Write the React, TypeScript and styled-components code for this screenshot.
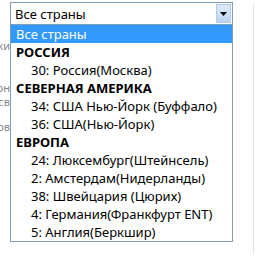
import React from 'react';
import styled, { createGlobalStyle } from 'styled-components';

const GlobalStyle = createGlobalStyle`
  html, body {
    margin: 0;
    padding: 0;
    background: #fff;
  }
`;

type Option = { label: string; kind: 'all' | 'group' | 'item' };

const options: Option[] = [
  { label: 'Все страны', kind: 'all' },
  { label: 'РОССИЯ', kind: 'group' },
  { label: '30: Россия(Москва)', kind: 'item' },
  { label: 'СЕВЕРНАЯ АМЕРИКА', kind: 'group' },
  { label: '34: США Нью-Йорк (Буффало)', kind: 'item' },
  { label: '36: США(Нью-Йорк)', kind: 'item' },
  { label: 'ЕВРОПА', kind: 'group' },
  { label: '24: Люксембург(Штейнсель)', kind: 'item' },
  { label: '2: Амстердам(Нидерланды)', kind: 'item' },
  { label: '38: Швейцария (Цюрих)', kind: 'item' },
  { label: '4: Германия(Франкфурт ENT)', kind: 'item' },
  { label: '5: Англия(Беркшир)', kind: 'item' },
];

// labels of the form behind the open list, only their ends peek out
const hiddenLabels = [
  { text: 'Настройки', gap: 37 },
  { text: 'Регион', gap: 29 },
  { text: 'Провайдер св', gap: 1 },
  { text: 'Тип сервера ов', gap: 12 },
];

const App = () => (
  <Root>
    <GlobalStyle />
    <Labels>
      {hiddenLabels.map((l) => (
        <Faded key={l.text} gap={l.gap}>{l.text}</Faded>
      ))}
    </Labels>
    <Field>
      <Select>
        <Value>Все страны</Value>
        <ArrowButton>
          <svg width="7" height="4" viewBox="0 0 7 4">
            <path d="M0 0h7L3.5 4z" fill="#000" />
          </svg>
        </ArrowButton>
      </Select>
      <List>
        {options.map((o, i) => (
          <Row key={o.label} kind={o.kind} selected={i === 0}>{o.label}</Row>
        ))}
      </List>
    </Field>
    <Divider />
  </Root>
);

const Root = styled.div`
  width: 259px;
  height: 256px;
  overflow: hidden;
  display: flex;
  align-items: flex-start;
  padding-top: 2px;
  box-sizing: border-box;
  font-family: "Noto Sans", "Open Sans", sans-serif;
`;

const Labels = styled.div`
  width: 10px;
  overflow: hidden;
  display: flex;
  flex-direction: column;
  align-items: flex-end;
`;

const Faded = styled.div<{ gap: number }>`
  margin-top: ${(p) => p.gap}px;
  font-size: 11px;
  line-height: 13px;
  color: #888;
  white-space: nowrap;
`;

const Field = styled.div`
  width: 223px;
  display: flex;
  flex-direction: column;
`;

const Select = styled.div`
  height: 23px;
  box-sizing: border-box;
  border: 1px solid #7f9db9;
  background: #fff;
  display: flex;
  align-items: center;
  justify-content: space-between;
  padding: 1px 1px 1px 4px;
`;

const Value = styled.span`
  font-size: 13px;
  color: #000;
`;

const ArrowButton = styled.div`
  width: 15px;
  height: 19px;
  box-sizing: border-box;
  border: 1px solid #b6cae6;
  background: linear-gradient(#dcebfb, #bcd5f3);
  display: flex;
  align-items: center;
  justify-content: center;
`;

const List = styled.div`
  margin-top: -1px;
  box-sizing: border-box;
  border: 1px solid #7f9db9;
  background: #fff;
  display: flex;
  flex-direction: column;
`;

const Row = styled.div<{ kind: Option['kind']; selected: boolean }>`
  height: 18px;
  line-height: 18px;
  font-size: 13px;
  white-space: nowrap;
  padding-left: ${(p) => (p.kind === 'item' ? '20px' : '5px')};
  font-weight: ${(p) => (p.kind === 'group' ? 700 : 400)};
  background: ${(p) => (p.selected ? '#3399ff' : 'transparent')};
  color: ${(p) => (p.selected ? '#fff' : '#000')};
`;

const Divider = styled.div`
  margin-left: 20px;
  width: 1px;
  height: 251px;
  margin-top: 1px;
  background: #e4e4e4;
`;

export default App;
